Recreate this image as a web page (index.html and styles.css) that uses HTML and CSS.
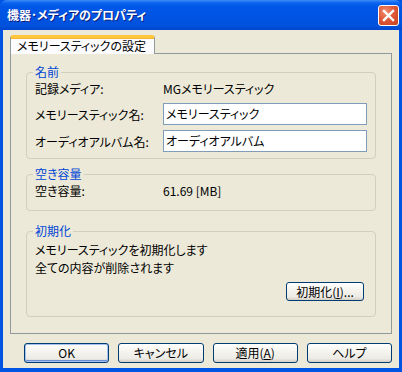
FILE: index.html
```html
<!DOCTYPE html>
<html lang="ja">
<head>
    <meta charset="UTF-8">
    <title>機器･メディアのプロパティ</title>
    <link rel="stylesheet" href="styles.css">
</head>
<body>
<div class="window">
    <div class="titlebar">
        <span class="title">機器･メディアのプロパティ</span>
        <span class="close">
            <svg width="13" height="13" viewBox="0 0 13 13">
                <path d="M2 2 L11 11 M11 2 L2 11" stroke="#fff" stroke-width="2.4" stroke-linecap="square"/>
            </svg>
        </span>
    </div>
    <div class="content">
        <div class="tabs">
            <span class="tab">メモリースティックの設定</span>
        </div>
        <div class="panel">
            <fieldset class="group group-name">
                <legend>名前</legend>
                <div class="row row-text">
                    <span class="label">記録メディア:</span>
                    <span class="value">MGメモリースティック</span>
                </div>
                <div class="row row-input">
                    <span class="label">メモリースティック名:</span>
                    <span class="input">メモリースティック</span>
                </div>
                <div class="row row-input">
                    <span class="label">オーディオアルバム名:</span>
                    <span class="input">オーディオアルバム</span>
                </div>
            </fieldset>
            <fieldset class="group group-free">
                <legend>空き容量</legend>
                <div class="row row-text">
                    <span class="label">空き容量:</span>
                    <span class="value">61.69 [MB]</span>
                </div>
            </fieldset>
            <fieldset class="group group-format">
                <legend>初期化</legend>
                <p class="note">メモリースティックを初期化します</p>
                <p class="note">全ての内容が削除されます</p>
                <div class="format-row">
                    <button class="btn btn-format">初期化(<u>I</u>)...</button>
                </div>
            </fieldset>
        </div>
        <div class="buttons">
            <button class="btn btn-default">OK</button>
            <button class="btn">キャンセル</button>
            <button class="btn">適用(<u>A</u>)</button>
            <button class="btn">ヘルプ</button>
        </div>
    </div>
</div>
</body>
</html>
```

FILE: styles.css
```css
* {
    margin: 0;
    padding: 0;
    box-sizing: border-box;
}

body {
    font-family: "Noto Sans CJK JP", "Liberation Sans", sans-serif;
    font-size: 12px;
    font-feature-settings: "palt";
    color: #000;
    background: #fff;
}

.window {
    width: 402px;
    height: 372px;
    display: flex;
    flex-direction: column;
    background: #0054e3;
    padding: 0 3px 4px 3px;
}

.titlebar {
    height: 30px;
    margin: 0 -3px;
    padding: 0 3px 0 7px;
    display: flex;
    align-items: center;
    justify-content: space-between;
    background: linear-gradient(#3d8bf7 0, #0a63ee 3px, #0058e8 6px, #0054e3 50%, #0052dd 85%, #0047cf 100%);
    border-radius: 7px 7px 0 0;
}

.title {
    color: #fff;
    font-weight: bold;
    font-size: 12px;
    line-height: 16px;
    text-shadow: 1px 1px 0 #0a1e80;
}

.close {
    width: 21px;
    height: 21px;
    margin-top: 1px;
    display: flex;
    align-items: center;
    justify-content: center;
    border: 1px solid #fff;
    border-radius: 3px;
    background: radial-gradient(circle at 35% 30%, #f09070 0, #e0593a 45%, #c7411d 100%);
}

.content {
    flex: 1;
    background: #ece9d8;
    padding: 5px 7px 0 7px;
    display: flex;
    flex-direction: column;
}

.tabs {
    display: flex;
    height: 19px;
}

.tab {
    position: relative;
    z-index: 1;
    height: 19px;
    padding: 0 8px 0 6px;
    background: #fcfcfe;
    border: 1px solid #919b9c;
    border-top: 3px solid #ffc83c;
    border-bottom: 0;
    border-radius: 3px 3px 0 0;
    line-height: 15px;
    box-shadow: inset 0 1px 0 #f5b52e;
}

.panel {
    height: 281px;
    border: 1px solid #919b9c;
    margin-top: -1px;
    padding: 11px 15px 0 15px;
    background: #ece9d8;
    display: flex;
    flex-direction: column;
}

.group {
    border: 1px solid #d0d0bf;
    border-radius: 4px;
    padding: 3px 8px 0 8px;
}

.group legend {
    color: #0046d5;
    line-height: 14px;
    padding: 0 2px;
    margin-left: -2px;
}

.group-name {
    padding-bottom: 6px;
}

.group-free {
    margin-top: 8px;
    padding-bottom: 12px;
}

.group-format {
    margin-top: 13px;
    padding-bottom: 15px;
}

.row {
    display: flex;
    align-items: center;
}

.row-text {
    height: 14px;
    line-height: 14px;
}

.row-input {
    height: 22px;
}

.group-name .row-input {
    margin-top: 7px;
}

.group-name .row-input + .row-input {
    margin-top: 5px;
}

.label {
    width: 128px;
    flex: none;
}

.input {
    width: 204px;
    height: 22px;
    border: 1px solid #7f9db9;
    background: #fff;
    padding-left: 2px;
    line-height: 20px;
}

.note {
    line-height: 18px;
}

.format-row {
    display: flex;
    justify-content: flex-end;
    margin-top: 5px;
    padding-right: 3px;
}

.btn {
    font: inherit;
    color: #000;
    height: 20px;
    width: 86px;
    border: 1px solid #003c74;
    border-radius: 3px;
    background: linear-gradient(#ffffff 0, #f5f4ef 40%, #ecebe5 80%, #d6d0c5 100%);
    line-height: 16px;
}

.btn-format {
    width: 78px;
    height: 19px;
}

.btn-default {
    box-shadow: inset 0 0 0 1px #a6c2ee, inset 0 -1px 0 1px #6d8fd8;
}

.buttons {
    display: flex;
    gap: 9px;
    margin-top: 9px;
    padding-left: 14px;
}
```
